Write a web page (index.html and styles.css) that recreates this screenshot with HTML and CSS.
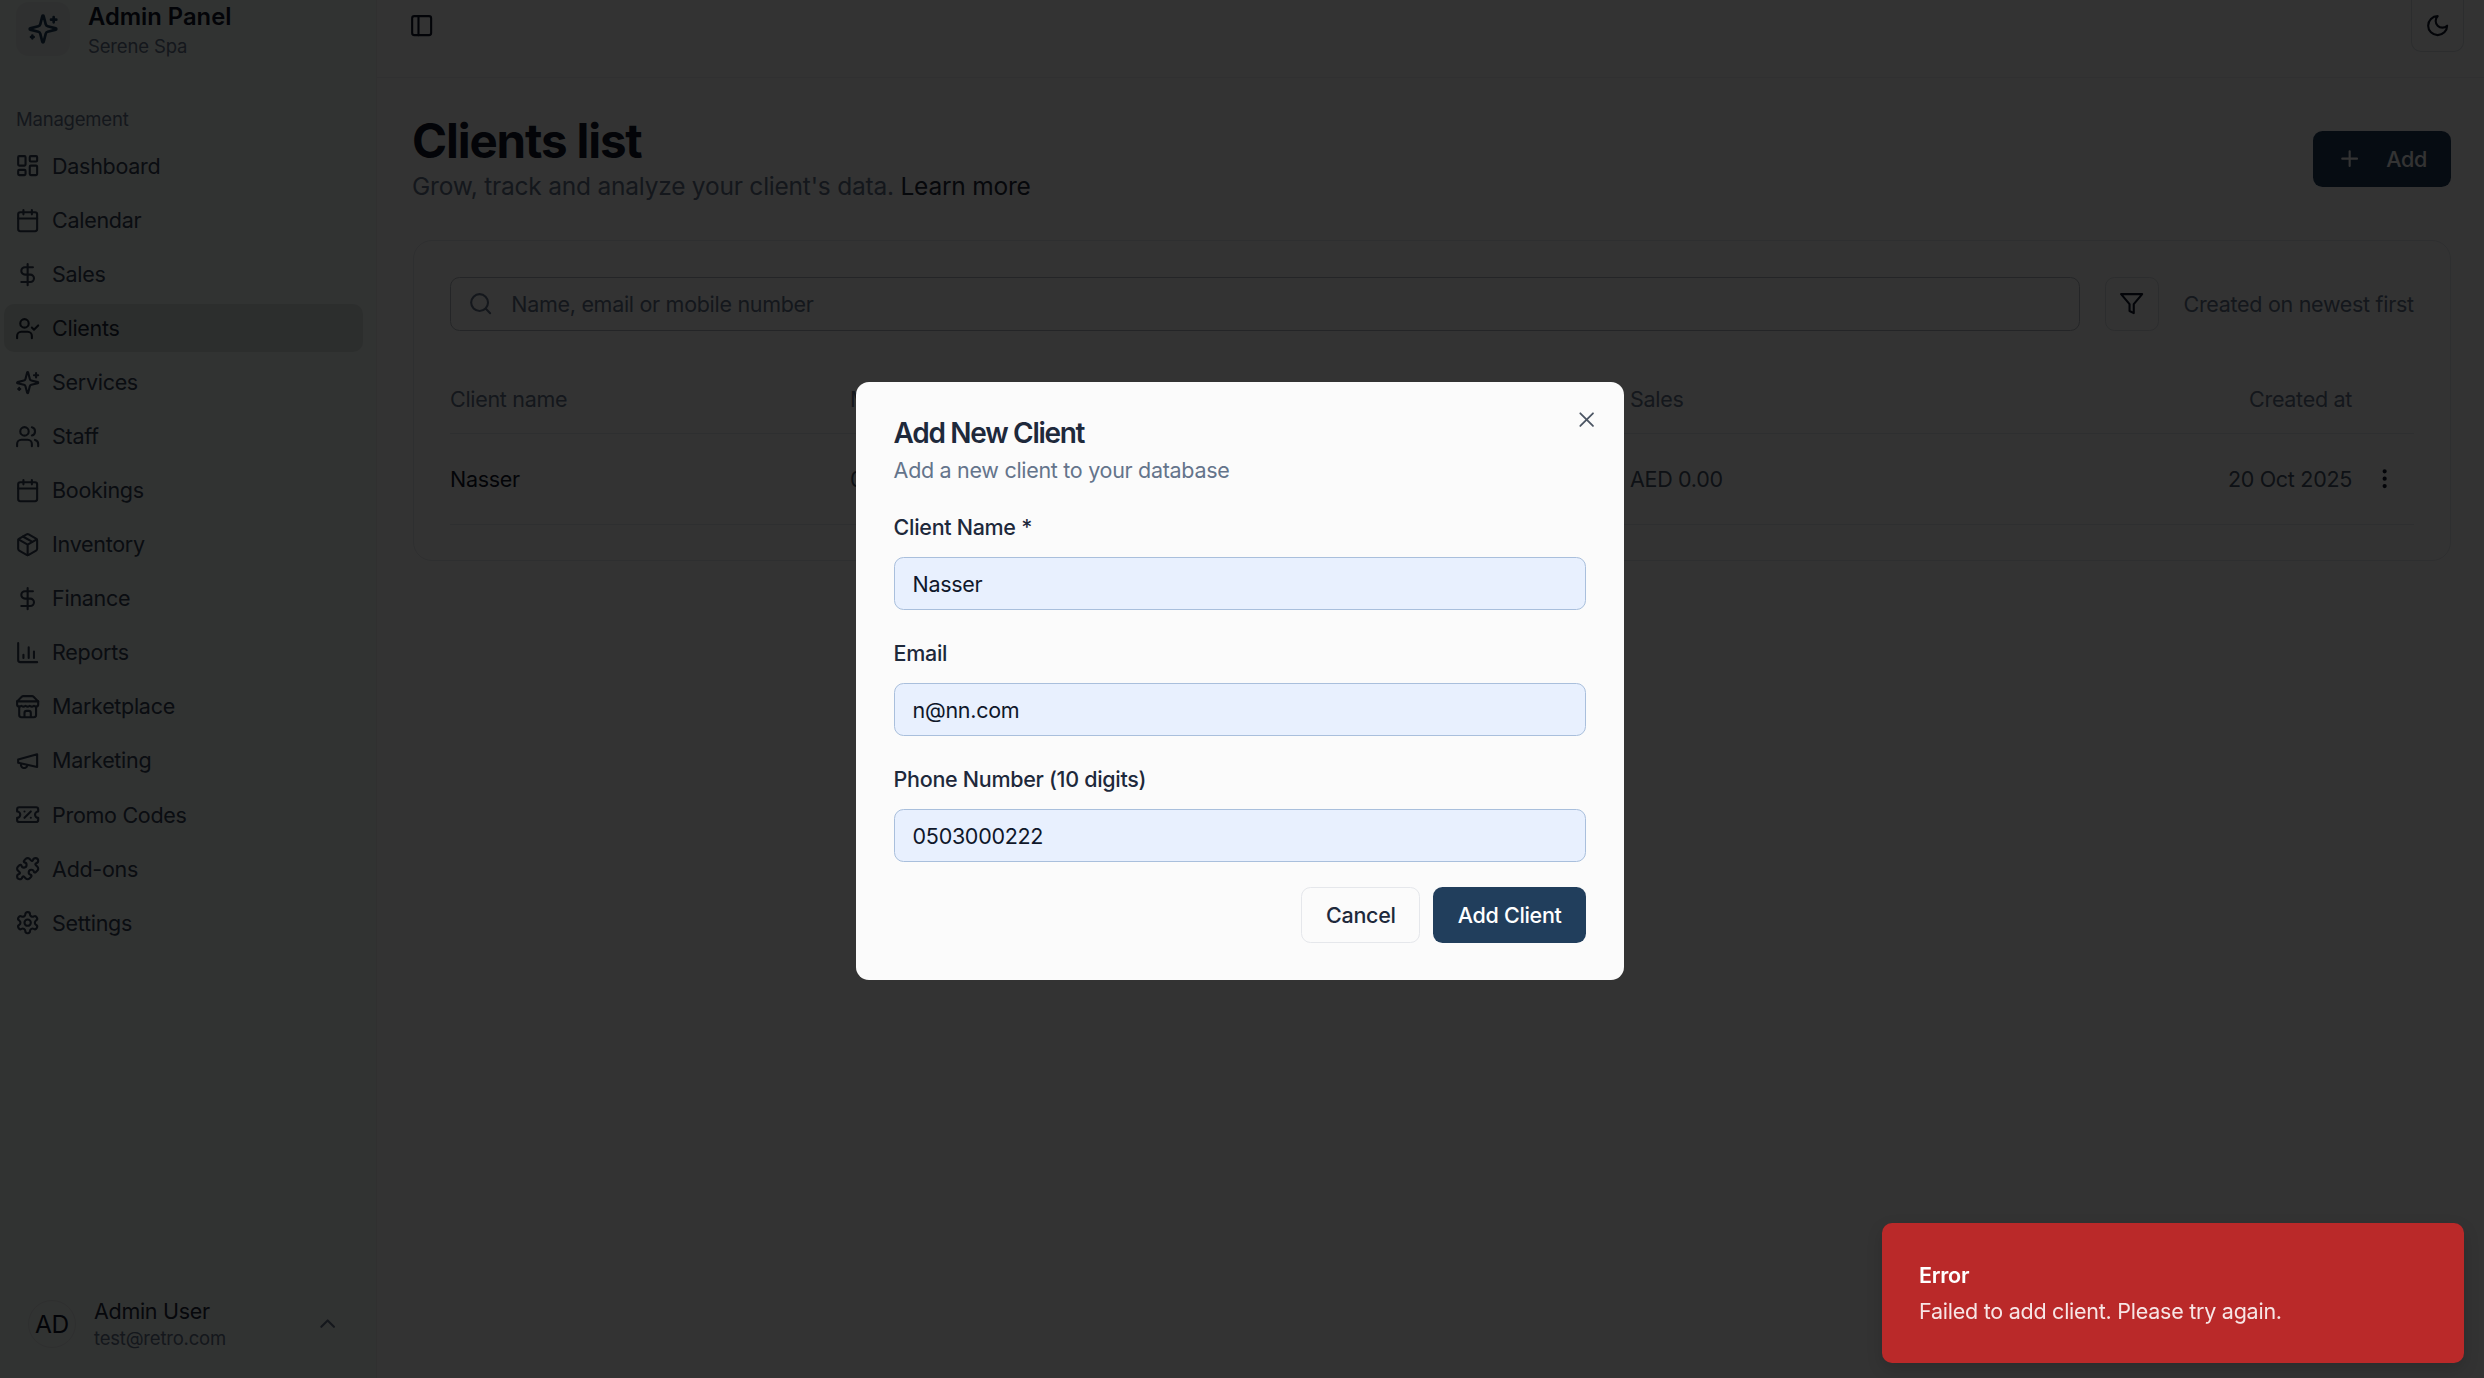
FILE: index.html
```html
<!DOCTYPE html>
<html lang="en">
<head>
<meta charset="utf-8">
<title>Clients list</title>
<link rel="stylesheet" href="styles.css">
</head>
<body>
<svg class="defs" width="0" height="0" aria-hidden="true">
  <symbol id="i-dash" viewBox="0 0 24 24"><rect x="3" y="3" width="7" height="9" rx="1"/><rect x="14" y="3" width="7" height="5" rx="1"/><rect x="14" y="12" width="7" height="9" rx="1"/><rect x="3" y="16" width="7" height="5" rx="1"/></symbol>
  <symbol id="i-cal" viewBox="0 0 24 24"><path d="M8 2v4M16 2v4"/><rect x="3" y="4" width="18" height="18" rx="2"/><path d="M3 10h18"/></symbol>
  <symbol id="i-dollar" viewBox="0 0 24 24"><path d="M12 2v20M17 5H9.5a3.5 3.5 0 0 0 0 7h5a3.5 3.5 0 0 1 0 7H6"/></symbol>
  <symbol id="i-usercheck" viewBox="0 0 24 24"><path d="M16 21v-2a4 4 0 0 0-4-4H6a4 4 0 0 0-4 4v2"/><circle cx="9" cy="7" r="4"/><path d="m16 11 2 2 4-4"/></symbol>
  <symbol id="i-spark" viewBox="0 0 24 24"><path d="M9.937 15.5A2 2 0 0 0 8.5 14.063l-6.135-1.582a.5.5 0 0 1 0-.962L8.5 9.936A2 2 0 0 0 9.937 8.5l1.582-6.135a.5.5 0 0 1 .963 0L14.063 8.5A2 2 0 0 0 15.5 9.937l6.135 1.581a.5.5 0 0 1 0 .964L15.5 14.063a2 2 0 0 0-1.437 1.437l-1.582 6.135a.5.5 0 0 1-.963 0z"/><path d="M20 3v4M22 5h-4M4 17v2M5 18H3"/></symbol>
  <symbol id="i-users" viewBox="0 0 24 24"><path d="M16 21v-2a4 4 0 0 0-4-4H6a4 4 0 0 0-4 4v2"/><circle cx="9" cy="7" r="4"/><path d="M22 21v-2a4 4 0 0 0-3-3.87M16 3.13a4 4 0 0 1 0 7.75"/></symbol>
  <symbol id="i-box" viewBox="0 0 24 24"><path d="M11 21.73a2 2 0 0 0 2 0l7-4A2 2 0 0 0 21 16V8a2 2 0 0 0-1-1.73l-7-4a2 2 0 0 0-2 0l-7 4A2 2 0 0 0 3 8v8a2 2 0 0 0 1 1.73z"/><path d="M12 22V12M3.29 7 12 12l8.71-5M7.5 4.27l9 5.15"/></symbol>
  <symbol id="i-chart" viewBox="0 0 24 24"><path d="M3 3v16a2 2 0 0 0 2 2h16M18 17v-6M13 17V7M8 17v-3"/></symbol>
  <symbol id="i-store" viewBox="0 0 24 24"><path d="m2 7 4.41-4.41A2 2 0 0 1 7.83 2h8.34a2 2 0 0 1 1.42.59L22 7M4 12v8a2 2 0 0 0 2 2h12a2 2 0 0 0 2-2v-8M15 22v-4a2 2 0 0 0-2-2h-2a2 2 0 0 0-2 2v4M2 7h20"/><path d="M22 7v3a2 2 0 0 1-2 2a2.7 2.7 0 0 1-1.59-.63.7.7 0 0 0-.82 0A2.7 2.7 0 0 1 16 12a2.7 2.7 0 0 1-1.59-.63.7.7 0 0 0-.82 0A2.7 2.7 0 0 1 12 12a2.7 2.7 0 0 1-1.59-.63.7.7 0 0 0-.82 0A2.7 2.7 0 0 1 8 12a2.7 2.7 0 0 1-1.59-.63.7.7 0 0 0-.82 0A2.7 2.7 0 0 1 4 12a2 2 0 0 1-2-2V7"/></symbol>
  <symbol id="i-mega" viewBox="0 0 24 24"><path d="m3 11 18-5v12L3 14v-3z"/><path d="M11.6 16.8a3 3 0 1 1-5.8-1.6"/></symbol>
  <symbol id="i-ticket" viewBox="0 0 24 24"><path d="M2 9a3 3 0 1 1 0 6v2a2 2 0 0 0 2 2h16a2 2 0 0 0 2-2v-2a3 3 0 1 1 0-6V7a2 2 0 0 0-2-2H4a2 2 0 0 0-2 2Z"/><path d="M9 9h.01M15 9l-6 6M15 15h.01"/></symbol>
  <symbol id="i-puzzle" viewBox="0 0 24 24"><path d="M15.39 4.39a1 1 0 0 0 1.68-.474 2.5 2.5 0 1 1 3.014 3.015 1 1 0 0 0-.474 1.68l1.683 1.682a2.414 2.414 0 0 1 0 3.414L19.61 15.39a1 1 0 0 1-1.68-.474 2.5 2.5 0 1 0-3.014 3.015 1 1 0 0 1 .474 1.68l-1.683 1.682a2.414 2.414 0 0 1-3.414 0L8.61 19.61a1 1 0 0 0-1.68.474 2.5 2.5 0 1 1-3.014-3.015 1 1 0 0 0 .474-1.68l-1.683-1.682a2.414 2.414 0 0 1 0-3.414L4.39 8.61a1 1 0 0 1 1.68.474 2.5 2.5 0 1 0 3.014-3.015 1 1 0 0 1-.474-1.68l1.683-1.682a2.414 2.414 0 0 1 3.414 0z"/></symbol>
  <symbol id="i-gear" viewBox="0 0 24 24"><path d="M12.22 2h-.44a2 2 0 0 0-2 2v.18a2 2 0 0 1-1 1.73l-.43.25a2 2 0 0 1-2 0l-.15-.08a2 2 0 0 0-2.73.73l-.22.38a2 2 0 0 0 .73 2.73l.15.1a2 2 0 0 1 1 1.72v.51a2 2 0 0 1-1 1.74l-.15.09a2 2 0 0 0-.73 2.73l.22.38a2 2 0 0 0 2.73.73l.15-.08a2 2 0 0 1 2 0l.43.25a2 2 0 0 1 1 1.73V20a2 2 0 0 0 2 2h.44a2 2 0 0 0 2-2v-.18a2 2 0 0 1 1-1.73l.43-.25a2 2 0 0 1 2 0l.15.08a2 2 0 0 0 2.73-.73l.22-.39a2 2 0 0 0-.73-2.73l-.15-.08a2 2 0 0 1-1-1.74v-.5a2 2 0 0 1 1-1.74l.15-.09a2 2 0 0 0 .73-2.73l-.22-.38a2 2 0 0 0-2.73-.73l-.15.08a2 2 0 0 1-2 0l-.43-.25a2 2 0 0 1-1-1.73V4a2 2 0 0 0-2-2z"/><circle cx="12" cy="12" r="3"/></symbol>
</svg>

<aside class="sidebar">
  <div class="brand">
    <div class="brand-logo"><svg class="icon-logo"><use href="#i-spark"/></svg></div>
    <div class="brand-text">
      <div class="brand-title">Admin Panel</div>
      <div class="brand-sub">Serene Spa</div>
    </div>
  </div>
  <div class="nav-label">Management</div>
  <nav class="nav">
    <a class="nav-item"><svg class="icon"><use href="#i-dash"/></svg>Dashboard</a>
    <a class="nav-item"><svg class="icon"><use href="#i-cal"/></svg>Calendar</a>
    <a class="nav-item"><svg class="icon"><use href="#i-dollar"/></svg>Sales</a>
    <a class="nav-item active"><svg class="icon"><use href="#i-usercheck"/></svg>Clients</a>
    <a class="nav-item"><svg class="icon"><use href="#i-spark"/></svg>Services</a>
    <a class="nav-item"><svg class="icon"><use href="#i-users"/></svg>Staff</a>
    <a class="nav-item"><svg class="icon"><use href="#i-cal"/></svg>Bookings</a>
    <a class="nav-item"><svg class="icon"><use href="#i-box"/></svg>Inventory</a>
    <a class="nav-item"><svg class="icon"><use href="#i-dollar"/></svg>Finance</a>
    <a class="nav-item"><svg class="icon"><use href="#i-chart"/></svg>Reports</a>
    <a class="nav-item"><svg class="icon"><use href="#i-store"/></svg>Marketplace</a>
    <a class="nav-item"><svg class="icon"><use href="#i-mega"/></svg>Marketing</a>
    <a class="nav-item"><svg class="icon"><use href="#i-ticket"/></svg>Promo Codes</a>
    <a class="nav-item"><svg class="icon"><use href="#i-puzzle"/></svg>Add-ons</a>
    <a class="nav-item"><svg class="icon"><use href="#i-gear"/></svg>Settings</a>
  </nav>
  <div class="user">
    <div class="avatar">AD</div>
    <div class="user-text">
      <div class="user-name">Admin User</div>
      <div class="user-mail">test@retro.com</div>
    </div>
    <svg class="icon chevron" viewBox="0 0 24 24"><path d="m18 15-6-6-6 6"/></svg>
  </div>
</aside>

<div class="main">
  <header class="topbar">
    <svg class="icon toggle" viewBox="0 0 24 24"><rect x="3" y="3" width="18" height="18" rx="2"/><path d="M9 3v18"/></svg>
    <div class="theme-btn"><svg class="icon" viewBox="0 0 24 24"><path d="M12 3a6 6 0 0 0 9 9 9 9 0 1 1-9-9Z"/></svg></div>
  </header>
  <main class="content">
    <div class="page-head">
      <div>
        <h1 class="page-title">Clients list</h1>
        <p class="page-sub">Grow, track and analyze your client's data. <span class="learn">Learn more</span></p>
      </div>
      <button class="add-btn"><svg class="icon" viewBox="0 0 24 24"><path d="M5 12h14M12 5v14"/></svg>Add</button>
    </div>
    <section class="card">
      <div class="toolbar">
        <div class="search">
          <svg class="icon" viewBox="0 0 24 24"><circle cx="11" cy="11" r="8"/><path d="m21 21-4.3-4.3"/></svg>
          <span>Name, email or mobile number</span>
        </div>
        <div class="filter-btn"><svg class="icon" viewBox="0 0 24 24"><path d="M22 3H2l8 9.46V19l4 2v-8.54z"/></svg></div>
        <div class="sort">Created on newest first</div>
      </div>
      <div class="table">
        <div class="tr th">
          <div>Client name</div><div>Mobile number</div><div>Sales</div><div class="right">Created at</div><div></div>
        </div>
        <div class="tr td">
          <div class="name">Nasser</div><div>0503000222</div><div>AED 0.00</div><div class="right">20 Oct 2025</div>
          <div class="dots"><svg class="icon" viewBox="0 0 24 24"><circle cx="12" cy="5" r="1"/><circle cx="12" cy="12" r="1"/><circle cx="12" cy="19" r="1"/></svg></div>
        </div>
      </div>
    </section>
  </main>
</div>

<div class="overlay"></div>

<div class="modal">
  <svg class="icon modal-close" viewBox="0 0 24 24"><path d="M18 6 6 18M6 6l12 12"/></svg>
  <h2 class="modal-title">Add New Client</h2>
  <p class="modal-desc">Add a new client to your database</p>
  <label class="field-label">Client Name *</label>
  <input class="field-input" value="Nasser">
  <label class="field-label">Email</label>
  <input class="field-input" value="n@nn.com">
  <label class="field-label">Phone Number (10 digits)</label>
  <input class="field-input" value="0503000222">
  <div class="modal-actions">
    <button class="btn-cancel">Cancel</button>
    <button class="btn-submit">Add Client</button>
  </div>
</div>

<div class="toast">
  <div class="toast-title">Error</div>
  <div class="toast-msg">Failed to add client. Please try again.</div>
</div>
</body>
</html>
```
FILE: styles.css
```css
* { box-sizing: border-box; }
html, body { margin: 0; height: 100%; }
body {
  width: 2484px;
  height: 1378px;
  overflow: hidden;
  display: flex;
  background: #fff;
  color: #0f172a;
  font-family: Inter, "Liberation Sans", sans-serif;
  font-size: 21.5px;
  letter-spacing: -0.3px;
}
.defs { position: absolute; }
.icon {
  width: 25.3px;
  height: 25.3px;
  flex: none;
  fill: none;
  stroke: currentColor;
  stroke-width: 2;
  stroke-linecap: round;
  stroke-linejoin: round;
}

/* Sidebar */
.sidebar {
  width: 377px;
  flex: none;
  height: 100%;
  display: flex;
  flex-direction: column;
  background: #f6fcf9;
  border-right: 1px solid #f0f0f0;
}
.brand { display: flex; gap: 18px; padding-left: 16px; height: 60px; }
.brand-logo {
  width: 54px;
  height: 54px;
  margin-top: 2px;
  border-radius: 13px;
  background: #e8f1ed;
  color: #213e5c;
  display: flex;
  align-items: center;
  justify-content: center;
}
.icon-logo {
  width: 32px; height: 32px;
  fill: none; stroke: currentColor; stroke-width: 2;
  stroke-linecap: round; stroke-linejoin: round;
}
.brand-title { font-size: 23.75px; font-weight: 600; line-height: 33px; letter-spacing: 0; }
.brand-sub { font-size: 18.5px; line-height: 27px; color: #64748b; letter-spacing: -0.15px; }
.nav-label {
  margin-top: 43.5px;
  padding-left: 16px;
  height: 30px;
  line-height: 30px;
  font-size: 18.5px;
  letter-spacing: -0.2px;
  color: #64748b;
}
.nav {
  margin-top: 8.8px;
  padding-left: 4px;
  width: 362.7px;
  display: flex;
  flex-direction: column;
  gap: 6.35px;
}
.nav-item {
  height: 47.7px;
  display: flex;
  align-items: center;
  gap: 11.8px;
  padding-left: 11px;
  border-radius: 10px;
  color: #334155;
}
.nav-item.active { background: #d9e6e1; color: #1e293b; }
.user {
  margin-top: auto;
  padding: 0 36px 26px 28px;
  display: flex;
  align-items: center;
  gap: 18px;
}
.avatar {
  width: 48px;
  height: 48px;
  border-radius: 50%;
  border: 1px solid #e4ebe8;
  display: flex;
  align-items: center;
  justify-content: center;
  font-size: 24.5px;
  flex: none;
}
.user-text { margin-top: 3px; }
.user-name { line-height: 27px; color: #1e293b; }
.user-mail { font-size: 18.5px; line-height: 27px; letter-spacing: -0.2px; color: #64748b; }
.chevron { margin-left: auto; color: #64748b; }

/* Main */
.main { flex: 1; min-width: 0; display: flex; flex-direction: column; }
.topbar {
  height: 78px;
  flex: none;
  display: flex;
  justify-content: space-between;
  align-items: flex-start;
  padding: 0 20px 0 31.5px;
  border-bottom: 1px solid #eef0f3;
}
.toggle { margin-top: 13px; color: #0f172a; }
.theme-btn {
  width: 53px;
  height: 52px;
  border: 1px solid #dadfe5;
  border-top: 0;
  border-radius: 0 0 10px 10px;
  display: flex;
  align-items: center;
  justify-content: center;
}
.content { padding: 35px 33px 0 35px; }
.page-head { display: flex; justify-content: space-between; align-items: center; }
.page-title { margin: 0; font-size: 47.5px; line-height: 55px; font-weight: 700; letter-spacing: -1.15px; }
.page-sub { margin: 0; font-size: 24.5px; line-height: 36px; letter-spacing: -0.22px; color: #64748b; }
.learn { color: #1e293b; }
.add-btn {
  width: 138px;
  height: 56px;
  border: 0;
  border-radius: 9.5px;
  background: #213e5c;
  color: #fff;
  font: 500 21.5px Inter, sans-serif;
  letter-spacing: -0.3px;
  display: flex;
  align-items: center;
  gap: 24px;
  padding: 0 24px;
}
.card {
  margin: 36px 0 0 1px;
  height: 321px;
  width: 2038px;
  border: 1px solid #e6e9ed;
  border-radius: 19px;
  padding: 36px;
}
.toolbar { display: flex; align-items: center; height: 54px; }
.search {
  width: 1630px;
  height: 54px;
  flex: none;
  border: 1px solid #b4bac2;
  border-radius: 9.5px;
  display: flex;
  align-items: center;
  gap: 18px;
  padding-left: 17px;
  color: #64748b;
}
.filter-btn {
  width: 54px;
  height: 54px;
  flex: none;
  margin-left: 25px;
  border: 1px solid #dadfe5;
  border-radius: 9.5px;
  display: flex;
  align-items: center;
  justify-content: center;
}
.sort { margin-left: 24.5px; color: #64748b; white-space: nowrap; }
.table { margin-top: 34px; width: 1964px; }
.tr {
  display: grid;
  grid-template-columns: 400px 780px 1fr auto 62px;
  align-items: center;
  border-bottom: 1px solid #e6e9ed;
}
.th { height: 69px; color: #64748b; }
.td { height: 91px; color: #475569; }
.name { color: #0f172a; }
.right { text-align: right; }
.dots { display: flex; justify-content: center; margin-left: 4px; color: #0f172a; }
.dots circle { fill: currentColor; }

/* Overlay */
.overlay { position: fixed; inset: 0; background: rgba(0, 0, 0, 0.8); }
.modal {
  position: fixed;
  left: 856px;
  top: 382px;
  width: 768px;
  height: 598px;
  padding: 32.5px 37.6px 0;
  border-radius: 13px;
  background: #fbfbfb;
  color: #1e293b;
}
.modal-close { position: absolute; right: 25px; top: 24.5px; color: #4b5563; stroke-width: 1.7; }
.modal-title { margin: 0; font-size: 28px; line-height: 36px; font-weight: 600; letter-spacing: -1.3px; }
.modal-desc { margin: 4.5px 0 27px; line-height: 30px; color: #64748b; }
.field-label { display: block; line-height: 30px; font-weight: 470; }
.field-input {
  display: block;
  width: 100%;
  height: 53px;
  margin: 15px 0 28px;
  padding: 0 18px;
  border: 1px solid #a9bfdc;
  border-radius: 9.5px;
  background: #e8f0fe;
  color: #0f172a;
  font: 400 21.5px Inter, sans-serif;
  letter-spacing: -0.3px;
  outline: 0;
}
.modal-actions { display: flex; justify-content: flex-end; gap: 12.5px; margin-top: -3px; }
.btn-cancel, .btn-submit {
  height: 55.5px;
  border-radius: 9.5px;
  font: 500 21.5px Inter, sans-serif;
  letter-spacing: -0.3px;
}
.btn-cancel { width: 119px; border: 1px solid #e5e7eb; background: #fbfbfb; color: #1e293b; }
.btn-submit { width: 153.5px; border: 0; background: #213e5c; color: #fff; }
.toast {
  position: fixed;
  left: 1882px;
  top: 1223px;
  width: 582px;
  height: 140px;
  padding: 35.5px 37px 0;
  border-radius: 10px;
  background: #ba2929;
  color: #fff;
  letter-spacing: -0.25px;
  box-shadow: 0 6px 16px rgba(0, 0, 0, 0.15);
}
.toast-title { font-weight: 600; line-height: 32px; }
.toast-msg { margin-top: 4px; line-height: 32px; color: rgba(255, 255, 255, 0.88); }
```
